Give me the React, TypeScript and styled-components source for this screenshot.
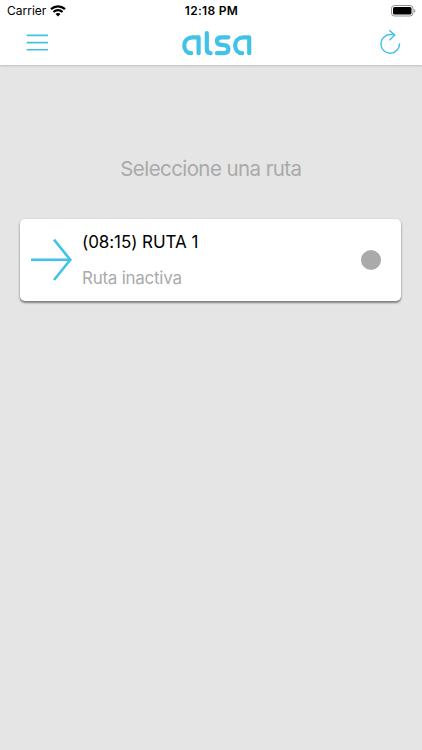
import React from "react";
import styled, { createGlobalStyle } from "styled-components";

const BLUE = "#41c3e8";

const GlobalStyle = createGlobalStyle`
  * { box-sizing: border-box; }
  body { margin: 0; background: #e5e5e5; font-family: Inter, "Liberation Sans", sans-serif; }
`;

const Screen = styled.div`
  min-height: 750px;
  display: flex;
  flex-direction: column;
  background: #e5e5e5;
`;

const Header = styled.header`
  height: 65px;
  background: #fff;
  box-shadow: 0 1px 2px rgba(0, 0, 0, 0.18);
`;

const StatusBar = styled.div`
  height: 22px;
  display: grid;
  grid-template-columns: 1fr auto 1fr;
  align-items: center;
  padding: 0 6px 0 7px;
  color: #000;
`;

const Carrier = styled.div`
  display: flex;
  align-items: center;
  gap: 4px;
  font-size: 12px;
  line-height: 22px;
  letter-spacing: 0;
`;

const Clock = styled.div`
  font-size: 12px;
  font-weight: 600;
  line-height: 22px;
  letter-spacing: 0.3px;
`;

const Battery = styled.div`
  display: flex;
  justify-content: flex-end;
`;

const NavBar = styled.nav`
  height: 43px;
  display: flex;
  justify-content: space-between;
  padding: 0 20px 0 25px;
`;

const IconButton = styled.button`
  width: 25px;
  height: 43px;
  padding: 0;
  border: 0;
  background: none;
  display: flex;
`;

const Icon = styled.svg`
  display: block;
  flex: none;
`;

const Content = styled.main`
  display: flex;
  flex-direction: column;
  padding: 89px 20.6px 0 20.4px;
`;

const Title = styled.h1`
  margin: 0 0 35px;
  font-size: 20.5px;
  font-weight: 400;
  line-height: 30px;
  letter-spacing: -0.58px;
  text-align: center;
  color: #aaa;
`;

const RouteCard = styled.article`
  height: 81.5px;
  display: flex;
  align-items: center;
  padding: 0 20.4px 0 9.6px;
  background: #fff;
  border-radius: 5px;
  box-shadow: 0 2px 2px rgba(0, 0, 0, 0.36), 0 1px 3px rgba(0, 0, 0, 0.2);
`;

const RouteText = styled.div`
  flex: 1;
  display: flex;
  flex-direction: column;
  gap: 12px;
  margin-left: 9px;
  white-space: nowrap;
`;

const RouteLine = styled.span<{ $muted?: boolean }>`
  font-size: 17px;
  line-height: 24px;
  letter-spacing: ${(p) => (p.$muted ? "-0.26px" : "-0.06px")};
  color: ${(p) => (p.$muted ? "#aaa" : "#000")};
`;

const StatusDot = styled.span`
  width: 20.5px;
  height: 20.5px;
  border-radius: 50%;
  background: #aaa;
`;

export default function App() {
  return (
    <Screen>
      <GlobalStyle />
      <Header>
        <StatusBar>
          <Carrier>
            Carrier
            <Icon width="16" height="12" viewBox="0 0 16 12" fill="none" stroke="#000">
              <path d="M1 4.2C5 .4 11 .4 15 4.2" strokeWidth="2.3" />
              <path d="M3.4 6.9C6 4.5 10 4.5 12.6 6.9" strokeWidth="2.1" />
              <path d="M8 11.6 5.5 9C6.9 7.7 9.1 7.7 10.5 9Z" fill="#000" stroke="none" />
            </Icon>
          </Carrier>
          <Clock>12:18 PM</Clock>
          <Battery>
            <Icon width="25" height="12" viewBox="0 0 25 12">
              <rect x=".5" y=".5" width="21.5" height="10.5" rx="3" fill="#fff" stroke="#909090" />
              <rect x="2" y="2" width="18.5" height="7.5" rx="1.5" fill="#000" />
              <path d="M23.2 4v3.7c1.6-.8 1.6-2.9 0-3.7Z" fill="#909090" />
            </Icon>
          </Battery>
        </StatusBar>
        <NavBar>
          <IconButton aria-label="Menú">
            <Icon width="25" height="43" viewBox="25 22 25 43" stroke={BLUE} strokeWidth="1.6">
              <path d="M26.7 35.4H48M26.7 42.6H48M26.7 49.8H48" />
            </Icon>
          </IconButton>
          <Icon width="74" height="43" viewBox="177 22 74 43" overflow="visible" role="img" aria-label="alsa" fill="none" stroke={BLUE} strokeWidth="4.2" strokeLinecap="round" strokeLinejoin="round">
            <path d="M191.2 53.2C187 53.2 184.3 50 184.3 45.7C184.3 40.7 187.8 37.3 192.5 37.3H198.6V53.2" />
            <path d="M206.8 33V48.8C206.8 51.7 208 53.2 210.6 53.2" />
            <path d="M228.3 37.3H221.5C218.3 37.3 216.9 38.8 216.9 41C216.9 43.7 218.6 44.7 221.3 44.9L224 45.1C227 45.4 228.4 46.6 228.4 49.1C228.4 51.9 226.6 53.2 223.8 53.2H217" />
            <path d="M242.2 53.2C238 53.2 235.2 50 235.2 45.7C235.2 40.7 238.7 37.3 243.4 37.3H249.2V53.2" />
          </Icon>
          <IconButton aria-label="Actualizar">
            <Icon width="25" height="43" viewBox="377 22 25 43" fill="none" stroke={BLUE} strokeWidth="1.5">
              <path d="M399.5 43.2A9.3 9.3 0 1 1 390.2 34.6H394.6" />
              <path d="M389.3 30.3 394.7 35.1 389.5 40.2" />
            </Icon>
          </IconButton>
        </NavBar>
      </Header>
      <Content>
        <Title>Seleccione una ruta</Title>
        <RouteCard>
          <Icon width="43" height="43" viewBox="0 0 43 43" fill="none" stroke={BLUE} strokeWidth="2.6">
            <path d="M1 21.8H40.5" />
            <path d="M24 1.6 40.3 21.8 24 42" />
          </Icon>
          <RouteText>
            <RouteLine>(08:15) RUTA 1</RouteLine>
            <RouteLine $muted>Ruta inactiva</RouteLine>
          </RouteText>
          <StatusDot />
        </RouteCard>
      </Content>
    </Screen>
  );
}
